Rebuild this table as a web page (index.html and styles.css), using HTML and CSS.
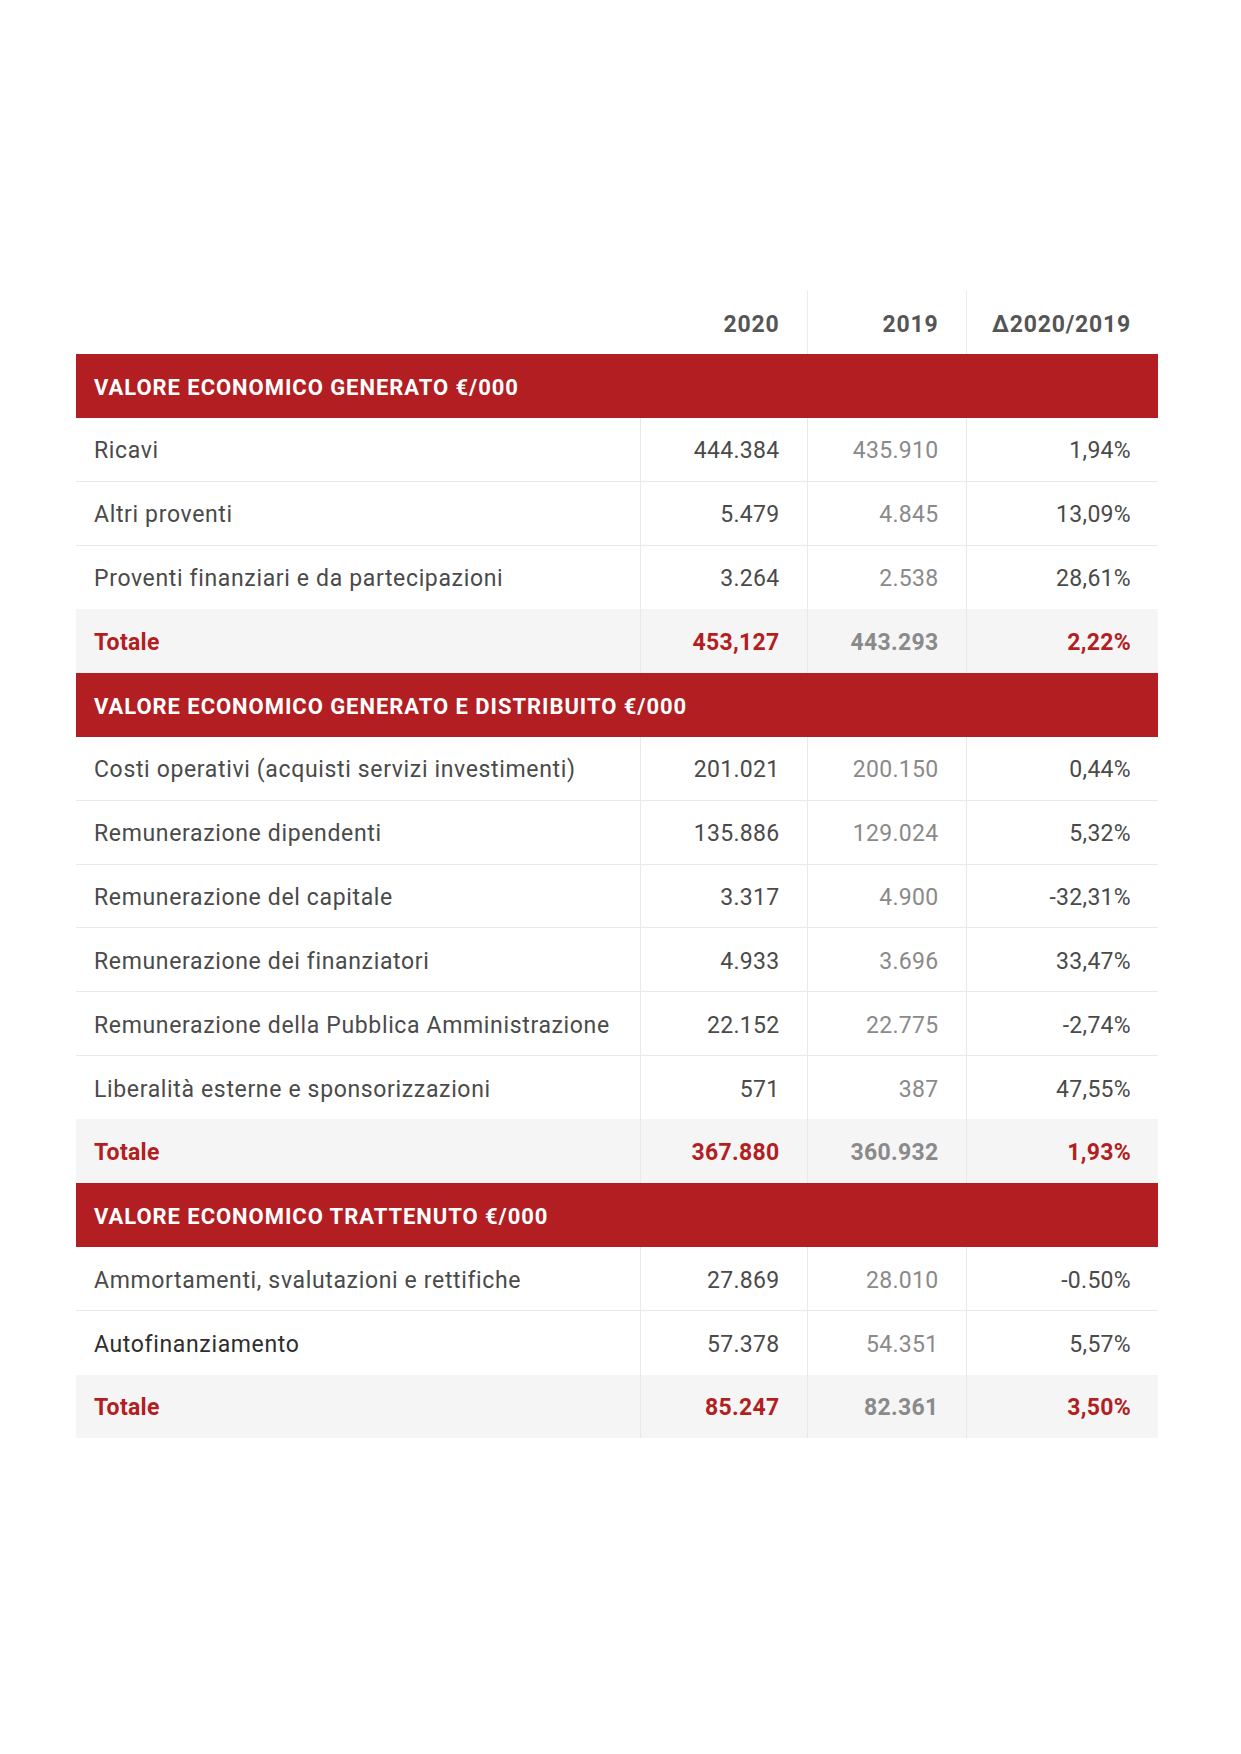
FILE: index.html
```html
<!DOCTYPE html>
<html lang="it">
<head>
<meta charset="utf-8">
<title>Valore economico</title>
<link rel="stylesheet" href="styles.css">
</head>
<body>
<main class="page">
  <table class="report">
    <colgroup>
      <col class="c-label">
      <col class="c-num">
      <col class="c-prev">
      <col class="c-delta">
    </colgroup>
    <thead>
      <tr class="head">
        <th class="blank"></th>
        <th class="num">2020</th>
        <th class="num sep">2019</th>
        <th class="num sep">Δ2020/2019</th>
      </tr>
    </thead>
    <tbody>
      <tr class="section"><td colspan="4">VALORE ECONOMICO GENERATO €/000</td></tr>
      <tr class="row"><td class="label">Ricavi</td><td class="num">444.384</td><td class="num prev">435.910</td><td class="num">1,94%</td></tr>
      <tr class="row"><td class="label">Altri proventi</td><td class="num">5.479</td><td class="num prev">4.845</td><td class="num">13,09%</td></tr>
      <tr class="row last"><td class="label">Proventi finanziari e da partecipazioni</td><td class="num">3.264</td><td class="num prev">2.538</td><td class="num">28,61%</td></tr>
      <tr class="total"><td class="label">Totale</td><td class="num">453,127</td><td class="num prev">443.293</td><td class="num">2,22%</td></tr>

      <tr class="section"><td colspan="4">VALORE ECONOMICO GENERATO E DISTRIBUITO €/000</td></tr>
      <tr class="row"><td class="label">Costi operativi (acquisti servizi investimenti)</td><td class="num">201.021</td><td class="num prev">200.150</td><td class="num">0,44%</td></tr>
      <tr class="row"><td class="label">Remunerazione dipendenti</td><td class="num">135.886</td><td class="num prev">129.024</td><td class="num">5,32%</td></tr>
      <tr class="row"><td class="label">Remunerazione del capitale</td><td class="num">3.317</td><td class="num prev">4.900</td><td class="num">-32,31%</td></tr>
      <tr class="row"><td class="label">Remunerazione dei finanziatori</td><td class="num">4.933</td><td class="num prev">3.696</td><td class="num">33,47%</td></tr>
      <tr class="row"><td class="label">Remunerazione della Pubblica Amministrazione</td><td class="num">22.152</td><td class="num prev">22.775</td><td class="num">-2,74%</td></tr>
      <tr class="row last"><td class="label">Liberalità esterne e sponsorizzazioni</td><td class="num">571</td><td class="num prev">387</td><td class="num">47,55%</td></tr>
      <tr class="total"><td class="label">Totale</td><td class="num">367.880</td><td class="num prev">360.932</td><td class="num">1,93%</td></tr>

      <tr class="section"><td colspan="4">VALORE ECONOMICO TRATTENUTO €/000</td></tr>
      <tr class="row"><td class="label">Ammortamenti, svalutazioni e rettifiche</td><td class="num">27.869</td><td class="num prev">28.010</td><td class="num">-0.50%</td></tr>
      <tr class="row last"><td class="label dark">Autofinanziamento</td><td class="num">57.378</td><td class="num prev">54.351</td><td class="num">5,57%</td></tr>
      <tr class="total"><td class="label">Totale</td><td class="num">85.247</td><td class="num prev">82.361</td><td class="num">3,50%</td></tr>
    </tbody>
  </table>
</main>
</body>
</html>
```
FILE: styles.css
```css
html, body {
  margin: 0;
  padding: 0;
  background: #ffffff;
}

.page {
  padding: 290px 0 0 76px;
}

.report {
  width: 1082px;
  table-layout: fixed;
  border-collapse: collapse;
  font-family: Roboto, "Liberation Sans", sans-serif;
  font-size: 23px;
  color: #4a4a4a;
}

.c-label { width: 564px; }
.c-num { width: 167px; }
.c-prev { width: 159px; }
.c-delta { width: 192px; }

.report th,
.report td {
  padding: 3px 27px 0 18px;
  height: 63.8px;
  box-sizing: border-box;
  vertical-align: middle;
}

.head th {
  font-weight: 700;
  color: #555555;
  text-align: right;
  letter-spacing: 0.8px;
  padding-top: 5px;
}

.head th.sep {
  border-left: 1px solid #ececec;
}

.num {
  text-align: right;
  letter-spacing: 0.3px;
}

.row td {
  border-bottom: 1px solid #e9e9e9;
}

.row.last td {
  border-bottom: none;
}

.row td + td,
.total td + td {
  border-left: 1px solid #e9e9e9;
}

.label {
  text-align: left;
  letter-spacing: 0.65px;
}

.label.dark {
  color: #2e2e2e;
}

.prev {
  color: #8a8a8a;
}

.section td {
  background: #b21e22;
  color: #ffffff;
  font-weight: 700;
  font-size: 22px;
  letter-spacing: 0.95px;
  text-align: left;
}

.total td {
  background: #f5f5f5;
  color: #b21e22;
  font-weight: 700;
}

.total td.label {
  letter-spacing: 0.3px;
}

.total td.prev {
  color: #8a8a8a;
}
```
